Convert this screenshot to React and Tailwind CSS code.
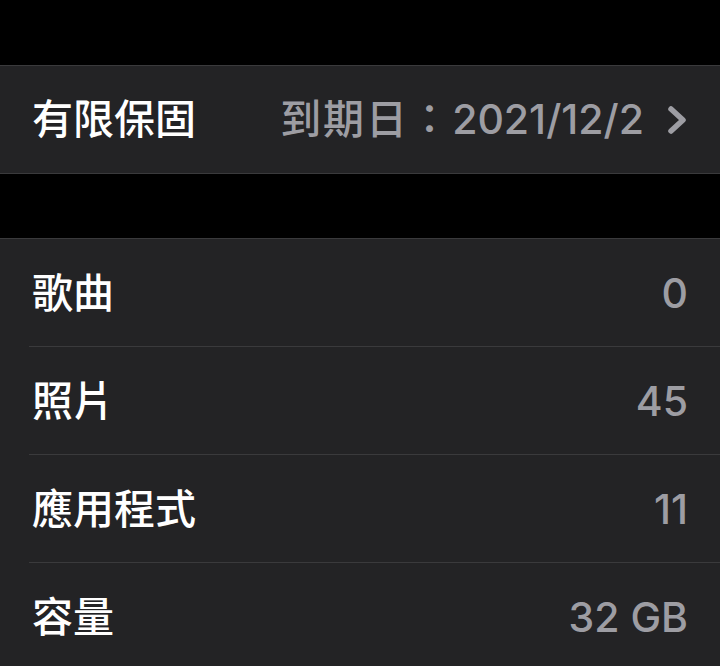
const rows = [
  { label: '歌曲', value: '0' },
  { label: '照片', value: '45' },
  { label: '應用程式', value: '11' },
  { label: '容量', value: '32 GB' },
];

function Chevron() {
  return (
    <svg width="22" height="30" viewBox="0 0 22 30" className="ml-[23px]" fill="none">
      <path d="M4 4 L16 15 L4 26" stroke="#9d9da3" strokeWidth="5.5" strokeLinecap="round" strokeLinejoin="round" />
    </svg>
  );
}

export default function App() {
  const font = { fontFamily: '"Inter", "Noto Sans CJK TC", sans-serif' };
  return (
    <div className="bg-black w-[720px] h-[666px] overflow-hidden text-[41px] font-medium" style={font}>
      <div className="h-[65px]" />
      <div className="bg-[#232325] border-y border-[#3a3a3c] h-[109px] flex items-center justify-between pl-8 pr-[31px]">
        <span className="text-white">有限保固</span>
        <div className="flex items-center text-[#9d9da3]">
          <span className="tracking-[2px]">到期日：</span>
          <span>2021/12/2</span>
          <Chevron />
        </div>
      </div>
      <div className="h-[64px]" />
      <div className="bg-[#232325] border-t border-[#3a3a3c]">
        {rows.map((r, i) => (
          <div key={r.label} className="pl-[29px]">
            <div className={`h-[108px] flex items-center justify-between pr-8 pt-[2px] ${i < rows.length - 1 ? 'border-b border-[#3a3a3c]' : ''}`}>
              <span className="text-white pl-[3px]">{r.label}</span>
              <span className="text-[#9d9da3]">{r.value}</span>
            </div>
          </div>
        ))}
      </div>
    </div>
  );
}
